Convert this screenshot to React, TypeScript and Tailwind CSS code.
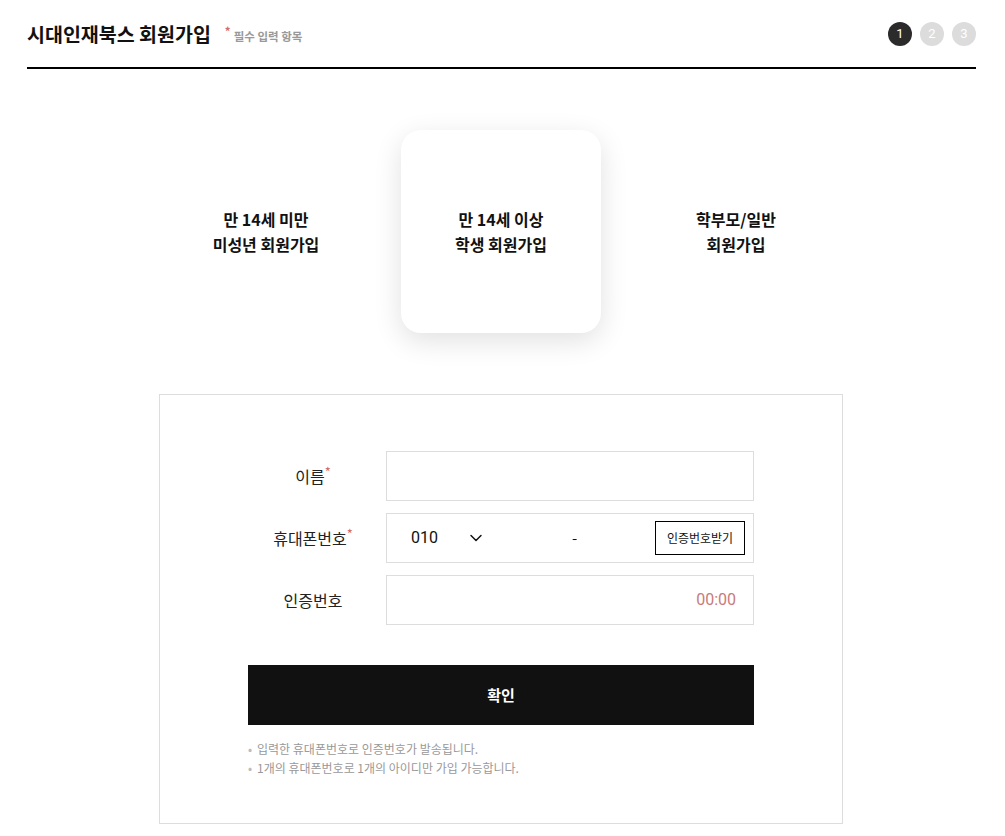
import { ChevronDown } from "lucide-react"

const font = { fontFamily: '"Noto Sans CJK KR", "Noto Sans", sans-serif' }

function Steps() {
  return (
    <div className="flex items-center gap-2">
      <span className="w-6 h-6 rounded-full bg-[#2b2b2b] text-white text-[13px] flex items-center justify-center leading-none" style={{ fontFamily: "Roboto, sans-serif" }}>1</span>
      <span className="w-6 h-6 rounded-full bg-[#dcdcdc] text-white text-[13px] flex items-center justify-center leading-none" style={{ fontFamily: "Roboto, sans-serif" }}>2</span>
      <span className="w-6 h-6 rounded-full bg-[#dcdcdc] text-white text-[13px] flex items-center justify-center leading-none" style={{ fontFamily: "Roboto, sans-serif" }}>3</span>
    </div>
  )
}

function Tab({ l1, l2, active }: { l1: string; l2: string; active?: boolean }) {
  return (
    <div
      className={
        "w-[200px] h-[203px] rounded-[20px] flex flex-col items-center justify-center text-[16px] font-bold leading-[25px] text-[#111] " +
        (active ? "bg-white shadow-[0_8px_28px_rgba(0,0,0,0.12)]" : "")
      }
    >
      <div>{l1}</div>
      <div>{l2}</div>
    </div>
  )
}

function Label({ text, required }: { text: string; required?: boolean }) {
  return (
    <div className="w-[130px] shrink-0 text-center text-[16px] text-[#222]">
      {text}
      {required && <span className="relative -top-[6px] text-[#d46a6a] text-[13px]">*</span>}
    </div>
  )
}

export default function App() {
  return (
    <div className="min-h-screen bg-white" style={font}>
      <header className="ml-[27px] w-[949px] h-[69px] border-b-2 border-black flex items-center justify-between">
        <div className="flex items-center">
          <h1 className="text-[19.5px] font-bold text-[#111] leading-none">시대인재북스 회원가입</h1>
          <span className="ml-[14px] text-[11.5px] text-[#999] font-bold mt-[6px] leading-none">
            <span className="relative -top-[5px] text-[#d46a6a] mr-[3px]">*</span>필수 입력 항목
          </span>
        </div>
        <Steps />
      </header>

      <section className="mt-[61px] ml-[166px] flex gap-[35px]">
        <Tab l1="만 14세 미만" l2="미성년 회원가입" />
        <Tab l1="만 14세 이상" l2="학생 회원가입" active />
        <Tab l1="학부모/일반" l2="회원가입" />
      </section>

      <section className="mt-[61px] ml-[159px] w-[684px] border border-[#dddddd] pt-[56px] pb-[46px]">
        <div className="w-[506px] mx-auto">
          <div className="flex flex-col gap-[12px]">
            <div className="flex items-center gap-2">
              <Label text="이름" required />
              <div className="w-[368px] h-[50px] border border-[#dddddd]"></div>
            </div>
            <div className="flex items-center gap-2">
              <Label text="휴대폰번호" required />
              <div className="w-[368px] h-[50px] border border-[#dddddd] flex items-center pl-[24px] pr-[8px]">
                <span className="text-[16px] text-[#111]" style={{ fontFamily: "Roboto, sans-serif" }}>010</span>
                <ChevronDown className="ml-[28px] w-[20px] h-[20px] text-[#111]" strokeWidth={1.75} />
                <span className="ml-[86px] text-[15px] text-[#111]">-</span>
                <button className="ml-auto w-[90px] h-[34px] border border-black text-[12px] text-[#111] bg-white">인증번호받기</button>
              </div>
            </div>
            <div className="flex items-center gap-2">
              <Label text="인증번호" />
              <div className="w-[368px] h-[50px] border border-[#dddddd] flex items-center justify-end pr-[17px]">
                <span className="text-[16px] text-[#c97a7a]" style={{ fontFamily: "Roboto, sans-serif" }}>00:00</span>
              </div>
            </div>
          </div>

          <button className="mt-[40px] w-full h-[60px] bg-[#111111] text-white text-[15px] font-bold">확인</button>

          <ul className="mt-[14px] text-[12px] text-[#999] leading-[19px]">
            <li className="flex"><span className="w-[9px] text-[#bbb]">•</span>입력한 휴대폰번호로 인증번호가 발송됩니다.</li>
            <li className="flex"><span className="w-[9px] text-[#bbb]">•</span>1개의 휴대폰번호로 1개의 아이디만 가입 가능합니다.</li>
          </ul>
        </div>
      </section>
    </div>
  )
}
